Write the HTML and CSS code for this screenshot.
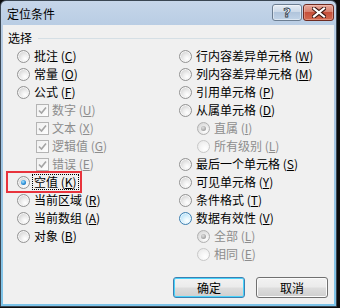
FILE: index.html
```html
<!DOCTYPE html>
<html lang="zh-CN">
<head>
<meta charset="utf-8">
<title>定位条件</title>
<link rel="stylesheet" href="styles.css">
</head>
<body>
<div class="window">
  <div class="titlebar">
    <span class="title">定位条件</span>
    <div class="caption-btns">
      <div class="cap help"><span class="qmark">?</span></div>
      <div class="cap close">
        <svg width="14" height="11" viewBox="0 0 14 11"><path d="M2 1.5 L12 9.5 M12 1.5 L2 9.5" stroke="#3b1610" stroke-width="4.2" stroke-linecap="square"/><path d="M2 1.5 L12 9.5 M12 1.5 L2 9.5" stroke="#ffffff" stroke-width="2.2" stroke-linecap="square"/></svg>
      </div>
    </div>
  </div>
  <div class="client">
    <div class="group-head"><span class="group-label">选择</span><span class="rule"></span></div>
    <div class="options">
      <div class="col">
        <div class="row"><span class="radio"></span><span class="lbl">批注 (<u>C</u>)</span></div>
        <div class="row"><span class="radio"></span><span class="lbl">常量 (<u>O</u>)</span></div>
        <div class="row"><span class="radio"></span><span class="lbl">公式 (<u>F</u>)</span></div>
        <div class="row sub"><span class="check"><svg width="11" height="11" viewBox="0 0 11 11"><path d="M2 5.5 L4.5 8 L9 2.5" fill="none" stroke="#a4a4a4" stroke-width="1.6"/></svg></span><span class="lbl dis">数字 (<u>U</u>)</span></div>
        <div class="row sub"><span class="check"><svg width="11" height="11" viewBox="0 0 11 11"><path d="M2 5.5 L4.5 8 L9 2.5" fill="none" stroke="#a4a4a4" stroke-width="1.6"/></svg></span><span class="lbl dis">文本 (<u>X</u>)</span></div>
        <div class="row sub"><span class="check"><svg width="11" height="11" viewBox="0 0 11 11"><path d="M2 5.5 L4.5 8 L9 2.5" fill="none" stroke="#a4a4a4" stroke-width="1.6"/></svg></span><span class="lbl dis">逻辑值 (<u>G</u>)</span></div>
        <div class="row sub"><span class="check"><svg width="11" height="11" viewBox="0 0 11 11"><path d="M2 5.5 L4.5 8 L9 2.5" fill="none" stroke="#a4a4a4" stroke-width="1.6"/></svg></span><span class="lbl dis">错误 (<u>E</u>)</span></div>
        <div class="row"><span class="radio on"></span><span class="lbl focus">空值 (<u>K</u>)</span></div>
        <div class="row"><span class="radio"></span><span class="lbl">当前区域 (<u>R</u>)</span></div>
        <div class="row"><span class="radio"></span><span class="lbl">当前数组 (<u>A</u>)</span></div>
        <div class="row"><span class="radio"></span><span class="lbl">对象 (<u>B</u>)</span></div>
      </div>
      <div class="col">
        <div class="row"><span class="radio"></span><span class="lbl">行内容差异单元格 (<u>W</u>)</span></div>
        <div class="row"><span class="radio"></span><span class="lbl">列内容差异单元格 (<u>M</u>)</span></div>
        <div class="row"><span class="radio"></span><span class="lbl">引用单元格 (<u>P</u>)</span></div>
        <div class="row"><span class="radio"></span><span class="lbl">从属单元格 (<u>D</u>)</span></div>
        <div class="row sub"><span class="radio dis on"></span><span class="lbl dis">直属 (<u>I</u>)</span></div>
        <div class="row sub"><span class="radio dis"></span><span class="lbl dis">所有级别 (<u>L</u>)</span></div>
        <div class="row"><span class="radio"></span><span class="lbl">最后一个单元格 (<u>S</u>)</span></div>
        <div class="row"><span class="radio"></span><span class="lbl">可见单元格 (<u>Y</u>)</span></div>
        <div class="row"><span class="radio"></span><span class="lbl">条件格式 (<u>T</u>)</span></div>
        <div class="row"><span class="radio hover"></span><span class="lbl">数据有效性 (<u>V</u>)</span></div>
        <div class="row sub"><span class="radio dis on"></span><span class="lbl dis">全部 (<u>L</u>)</span></div>
        <div class="row sub"><span class="radio dis"></span><span class="lbl dis">相同 (<u>E</u>)</span></div>
      </div>
    </div>
    <div class="buttons">
      <div class="btn default">确定</div>
      <div class="btn">取消</div>
    </div>
  </div>
  <div class="annot"></div>
</div>
</body>
</html>
```
FILE: styles.css
```css
html, body {
  margin: 0;
  padding: 0;
}
body {
  width: 340px;
  height: 308px;
  overflow: hidden;
  background: #0c0c0c;
  font-family: "Noto Sans CJK SC", "Noto Sans", sans-serif;
  font-size: 12px;
  color: #000;
}
.window {
  position: relative;
  box-sizing: border-box;
  width: 337px;
  height: 307px;
  border: 1px solid #3a4652;
  border-radius: 6px 6px 0 0;
  background: linear-gradient(to bottom, #c6d6e9 0px, #b9cde4 24px, #a9c6e2 120px, #7cc3e8 100%);
  display: flex;
  flex-direction: column;
}
.titlebar {
  height: 24px;
  display: flex;
  align-items: flex-start;
  padding: 0 2px 0 6px;
}
.title {
  line-height: 26px;
  font-size: 12px;
  color: #000;
}
.caption-btns {
  margin-left: auto;
  margin-top: 3px;
  display: flex;
  gap: 1px;
}
.cap {
  box-sizing: border-box;
  height: 17px;
  border-radius: 3px;
  display: flex;
  align-items: center;
  justify-content: center;
}
.help {
  width: 30px;
  border: 1px solid #6c7e92;
  background: linear-gradient(to bottom, #e6edf5 0%, #ccd9e8 45%, #b1c5dc 50%, #c1d3e7 100%);
  box-shadow: inset 0 0 0 1px rgba(255,255,255,0.45);
}
.qmark {
  font-family: "DejaVu Sans", sans-serif;
  font-weight: bold;
  font-size: 13px;
  line-height: 13px;
  color: #fff;
  -webkit-text-stroke: 0.8px #2c3a4a;
}
.close {
  width: 31px;
  border: 1px solid #6e2a20;
  background: linear-gradient(to bottom, #e9a99b 0%, #d7816f 45%, #c6503b 50%, #d36a50 100%);
  box-shadow: inset 0 0 0 1px rgba(255,220,210,0.35);
}
.client {
  flex: 1;
  margin: 0 2px 2px 2px;
  background: #f0f0f0;
  display: flex;
  flex-direction: column;
  padding-bottom: 6px;
}
.group-head {
  margin-top: 6px;
  height: 14px;
  display: flex;
  align-items: center;
  padding-left: 5px;
  padding-right: 4px;
}
.group-label {
  line-height: 14px;
}
.rule {
  flex: 1;
  height: 1px;
  margin-left: 6px;
  background: #d5dfe5;
}
.options {
  margin-top: 2px;
  padding-left: 14px;
  display: grid;
  grid-template-columns: 162px 1fr;
}
.row {
  height: 18px;
  display: flex;
  align-items: center;
}
.row.sub {
  padding-left: 19px;
}
.col:last-child .row.sub {
  padding-left: 18px;
}
.radio {
  position: relative;
  flex: none;
  box-sizing: border-box;
  width: 13px;
  height: 13px;
  border-radius: 50%;
  border: 1px solid #939393;
  background: radial-gradient(circle at 65% 70%, #ffffff 0%, #f1f1f1 30%, #d2d2d2 80%);
  box-shadow: inset 0 0 0 1px #f6f6f6;
  margin-right: 4px;
}
.radio.on::after {
  content: "";
  position: absolute;
  left: 3px;
  top: 3px;
  width: 5px;
  height: 5px;
  border-radius: 50%;
  background: radial-gradient(circle at 40% 35%, #a8e4ff 0%, #2a8fd8 55%, #0d4f8e 100%);
}
.radio.hover {
  border-color: #3c7fb1;
  background: radial-gradient(circle at 65% 70%, #ffffff 0%, #e5f6fd 30%, #acdcf7 85%);
  box-shadow: inset 0 0 0 1px #e9f7fe;
}
.radio.dis {
  border-color: #c8c8c8;
  background: radial-gradient(circle at 65% 70%, #ffffff 0%, #f6f6f6 40%, #e8e8e8 90%);
  box-shadow: none;
}
.radio.dis.on {
  border-color: #b0b0b0;
  background: radial-gradient(circle at 65% 70%, #ffffff 0%, #efefef 35%, #d6d6d6 85%);
}
.radio.dis.on::after {
  background: radial-gradient(circle at 40% 35%, #e0e0e0 0%, #a9a9a9 60%, #909090 100%);
}
.check {
  flex: none;
  box-sizing: border-box;
  width: 13px;
  height: 13px;
  border: 1px solid #b4b4b4;
  background: linear-gradient(135deg, #f0f0f0, #fdfdfd);
  display: flex;
  align-items: center;
  justify-content: center;
  margin-right: 3px;
}
.lbl {
  white-space: nowrap;
  line-height: 14px;
}
.lbl u {
  text-decoration: underline;
  text-underline-offset: 1px;
}
.lbl.dis {
  color: #8d8d8d;
}
.lbl.focus {
  outline: 1px dotted #000;
  outline-offset: 0;
  padding: 0 1px;
  margin-left: -1px;
}
.buttons {
  margin-top: auto;
  display: flex;
  justify-content: flex-end;
  gap: 11px;
  padding-right: 6px;
}
.btn {
  box-sizing: border-box;
  width: 72px;
  height: 21px;
  border: 1px solid #707070;
  border-radius: 3px;
  background: linear-gradient(to bottom, #f2f2f2 0%, #ebebeb 48%, #dddddd 52%, #cfcfcf 100%);
  box-shadow: inset 0 0 0 1px #fbfbfb;
  display: flex;
  align-items: center;
  justify-content: center;
  line-height: 14px;
}
.btn.default {
  border-color: #3c7fb1;
  box-shadow: inset 0 0 0 1px #48d3fb;
}
.annot {
  position: absolute;
  left: 5px;
  top: 170px;
  width: 76px;
  height: 22px;
  box-sizing: border-box;
  border: 2px solid #e8333c;
}
```
